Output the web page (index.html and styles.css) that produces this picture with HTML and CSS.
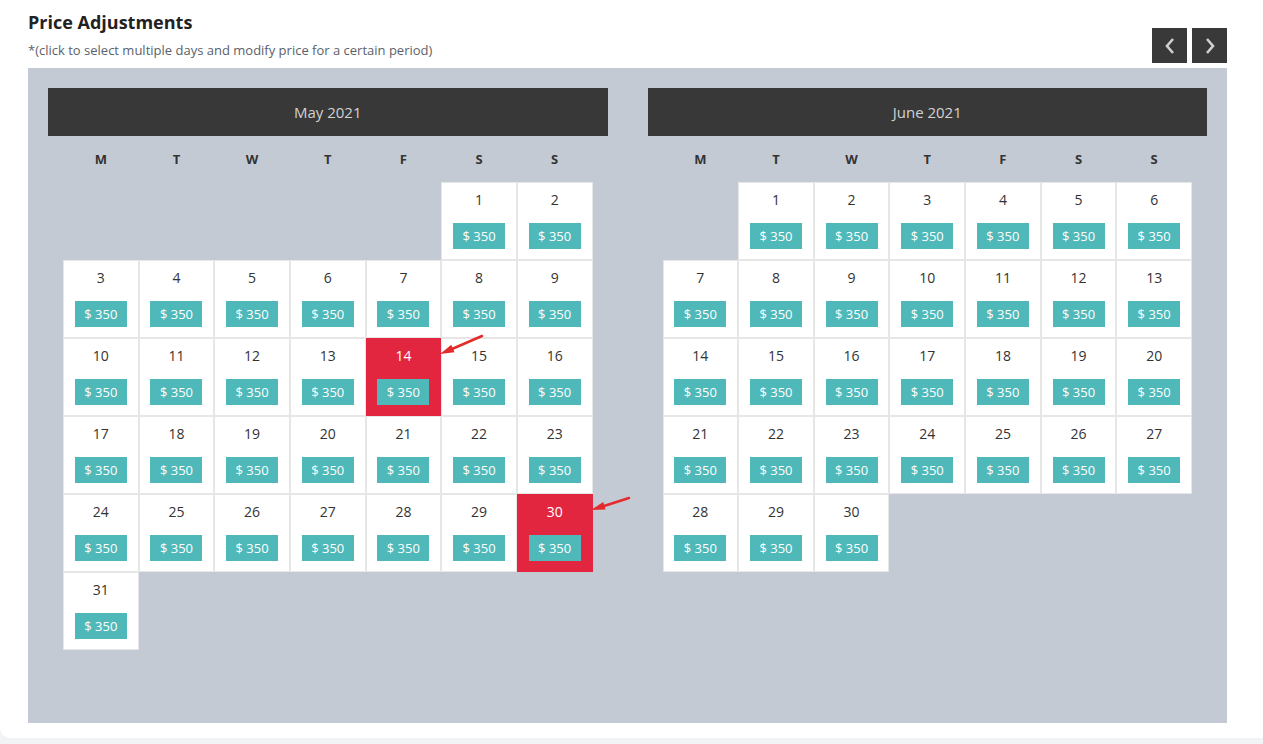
FILE: index.html
```html
<!DOCTYPE html>
<html lang="en">
<head>
<meta charset="utf-8">
<title>Price Adjustments</title>
<link rel="stylesheet" href="styles.css">
</head>
<body>
<div class="card">
  <div class="top">
    <div class="titles">
      <h1 class="title">Price Adjustments</h1>
      <p class="subtitle">*(click to select multiple days and modify price for a certain period)</p>
    </div>
    <div class="nav">
      <button class="nav-btn" aria-label="Previous"><svg width="12" height="18" viewBox="0 0 12 18"><path d="M9 2 L3 9 L9 16" fill="none" stroke="#cfcfcf" stroke-width="2.6"/></svg></button>
      <button class="nav-btn" aria-label="Next"><svg width="12" height="18" viewBox="0 0 12 18"><path d="M3 2 L9 9 L3 16" fill="none" stroke="#cfcfcf" stroke-width="2.6"/></svg></button>
    </div>
  </div>
  <div class="board">
    <div class="month">
      <div class="month-head">May 2021</div>
      <div class="month-body">
        <div class="weekdays"><span>M</span><span>T</span><span>W</span><span>T</span><span>F</span><span>S</span><span>S</span></div>
        <div class="days">
          <div class="empty"></div><div class="empty"></div><div class="empty"></div><div class="empty"></div><div class="empty"></div>
          <div class="day"><span class="num">1</span><span class="price">$ 350</span></div>
          <div class="day"><span class="num">2</span><span class="price">$ 350</span></div>
          <div class="day"><span class="num">3</span><span class="price">$ 350</span></div>
          <div class="day"><span class="num">4</span><span class="price">$ 350</span></div>
          <div class="day"><span class="num">5</span><span class="price">$ 350</span></div>
          <div class="day"><span class="num">6</span><span class="price">$ 350</span></div>
          <div class="day"><span class="num">7</span><span class="price">$ 350</span></div>
          <div class="day"><span class="num">8</span><span class="price">$ 350</span></div>
          <div class="day"><span class="num">9</span><span class="price">$ 350</span></div>
          <div class="day"><span class="num">10</span><span class="price">$ 350</span></div>
          <div class="day"><span class="num">11</span><span class="price">$ 350</span></div>
          <div class="day"><span class="num">12</span><span class="price">$ 350</span></div>
          <div class="day"><span class="num">13</span><span class="price">$ 350</span></div>
          <div class="day sel"><span class="num">14</span><span class="price">$ 350</span></div>
          <div class="day"><span class="num">15</span><span class="price">$ 350</span></div>
          <div class="day"><span class="num">16</span><span class="price">$ 350</span></div>
          <div class="day"><span class="num">17</span><span class="price">$ 350</span></div>
          <div class="day"><span class="num">18</span><span class="price">$ 350</span></div>
          <div class="day"><span class="num">19</span><span class="price">$ 350</span></div>
          <div class="day"><span class="num">20</span><span class="price">$ 350</span></div>
          <div class="day"><span class="num">21</span><span class="price">$ 350</span></div>
          <div class="day"><span class="num">22</span><span class="price">$ 350</span></div>
          <div class="day"><span class="num">23</span><span class="price">$ 350</span></div>
          <div class="day"><span class="num">24</span><span class="price">$ 350</span></div>
          <div class="day"><span class="num">25</span><span class="price">$ 350</span></div>
          <div class="day"><span class="num">26</span><span class="price">$ 350</span></div>
          <div class="day"><span class="num">27</span><span class="price">$ 350</span></div>
          <div class="day"><span class="num">28</span><span class="price">$ 350</span></div>
          <div class="day"><span class="num">29</span><span class="price">$ 350</span></div>
          <div class="day sel"><span class="num">30</span><span class="price">$ 350</span></div>
          <div class="day"><span class="num">31</span><span class="price">$ 350</span></div>
        </div>
      </div>
    </div>
    <div class="month">
      <div class="month-head">June 2021</div>
      <div class="month-body">
        <div class="weekdays"><span>M</span><span>T</span><span>W</span><span>T</span><span>F</span><span>S</span><span>S</span></div>
        <div class="days">
          <div class="empty"></div>
          <div class="day"><span class="num">1</span><span class="price">$ 350</span></div>
          <div class="day"><span class="num">2</span><span class="price">$ 350</span></div>
          <div class="day"><span class="num">3</span><span class="price">$ 350</span></div>
          <div class="day"><span class="num">4</span><span class="price">$ 350</span></div>
          <div class="day"><span class="num">5</span><span class="price">$ 350</span></div>
          <div class="day"><span class="num">6</span><span class="price">$ 350</span></div>
          <div class="day"><span class="num">7</span><span class="price">$ 350</span></div>
          <div class="day"><span class="num">8</span><span class="price">$ 350</span></div>
          <div class="day"><span class="num">9</span><span class="price">$ 350</span></div>
          <div class="day"><span class="num">10</span><span class="price">$ 350</span></div>
          <div class="day"><span class="num">11</span><span class="price">$ 350</span></div>
          <div class="day"><span class="num">12</span><span class="price">$ 350</span></div>
          <div class="day"><span class="num">13</span><span class="price">$ 350</span></div>
          <div class="day"><span class="num">14</span><span class="price">$ 350</span></div>
          <div class="day"><span class="num">15</span><span class="price">$ 350</span></div>
          <div class="day"><span class="num">16</span><span class="price">$ 350</span></div>
          <div class="day"><span class="num">17</span><span class="price">$ 350</span></div>
          <div class="day"><span class="num">18</span><span class="price">$ 350</span></div>
          <div class="day"><span class="num">19</span><span class="price">$ 350</span></div>
          <div class="day"><span class="num">20</span><span class="price">$ 350</span></div>
          <div class="day"><span class="num">21</span><span class="price">$ 350</span></div>
          <div class="day"><span class="num">22</span><span class="price">$ 350</span></div>
          <div class="day"><span class="num">23</span><span class="price">$ 350</span></div>
          <div class="day"><span class="num">24</span><span class="price">$ 350</span></div>
          <div class="day"><span class="num">25</span><span class="price">$ 350</span></div>
          <div class="day"><span class="num">26</span><span class="price">$ 350</span></div>
          <div class="day"><span class="num">27</span><span class="price">$ 350</span></div>
          <div class="day"><span class="num">28</span><span class="price">$ 350</span></div>
          <div class="day"><span class="num">29</span><span class="price">$ 350</span></div>
          <div class="day"><span class="num">30</span><span class="price">$ 350</span></div>
        </div>
      </div>
    </div>
  </div>
  <svg class="annot" width="1263" height="744" viewBox="0 0 1263 744" aria-hidden="true">
    <line x1="482" y1="336" x2="452" y2="349" stroke="#e42b2b" stroke-width="2.5" stroke-linecap="round"/>
    <polygon points="440,354 454.5,352.2 451.3,344.8" fill="#e42b2b"/>
    <line x1="629" y1="498" x2="604" y2="506" stroke="#e42b2b" stroke-width="2.5" stroke-linecap="round"/>
    <polygon points="591,510 605.6,509.6 603.2,502" fill="#e42b2b"/>
  </svg>
</div>
</body>
</html>
```
FILE: styles.css
```css
html, body {
  margin: 0;
  padding: 0;
  background: #f2f3f5;
  overflow: hidden;
}
body {
  font-family: "Open Sans", "Liberation Sans", sans-serif;
}
.card {
  position: relative;
  background: #fff;
  height: 738px;
  box-sizing: border-box;
  padding: 10px 0 15px 28px;
  border-radius: 0 0 0 10px;
}
.top {
  display: flex;
  justify-content: space-between;
  align-items: flex-end;
  width: 1199px;
  height: 58px;
}
.titles {
  align-self: flex-start;
}
.title {
  margin: 0;
  font-size: 18px;
  line-height: 25px;
  font-weight: 700;
  color: #222;
}
.subtitle {
  margin: 6px 0 0;
  font-size: 13px;
  line-height: 18px;
  color: #5b5f6a;
}
.nav {
  display: flex;
  gap: 5px;
  margin-bottom: 5px;
}
.nav-btn {
  width: 35px;
  height: 35px;
  padding: 0;
  border: 0;
  background: #393939;
  display: flex;
  align-items: center;
  justify-content: center;
}
.board {
  width: 1199px;
  height: 655px;
  box-sizing: border-box;
  background: #c4cad4;
  padding: 20px;
  display: flex;
  gap: 40px;
}
.month {
  flex: 1 1 0;
  min-width: 0;
}
.month-head {
  height: 48px;
  background: #383838;
  color: #d2d2d2;
  font-size: 15px;
  line-height: 48px;
  text-align: center;
}
.month-body {
  padding: 0 15px;
}
.weekdays {
  display: grid;
  grid-template-columns: repeat(7, 1fr);
  height: 45px;
  align-items: center;
  text-align: center;
  font-size: 13px;
  font-weight: 700;
  color: #333;
  padding-bottom: 1px;
}
.days {
  display: grid;
  grid-template-columns: repeat(7, 1fr);
  grid-auto-rows: 78px;
}
.day {
  box-sizing: border-box;
  border: 1px solid #e6e6e6;
  background: #fff;
  display: flex;
  flex-direction: column;
  align-items: center;
  padding-top: 7px;
}
.day.sel {
  background: #e3263f;
  border-color: #e3263f;
}
.num {
  font-size: 14px;
  line-height: 20px;
  color: #333;
}
.day.sel .num {
  color: #fff;
}
.price {
  margin-top: 13px;
  width: 52px;
  height: 26px;
  background: #4fb8b9;
  color: #fff;
  font-size: 13px;
  line-height: 26px;
  text-align: center;
}
.annot {
  position: absolute;
  left: 0;
  top: 0;
  pointer-events: none;
}
```
